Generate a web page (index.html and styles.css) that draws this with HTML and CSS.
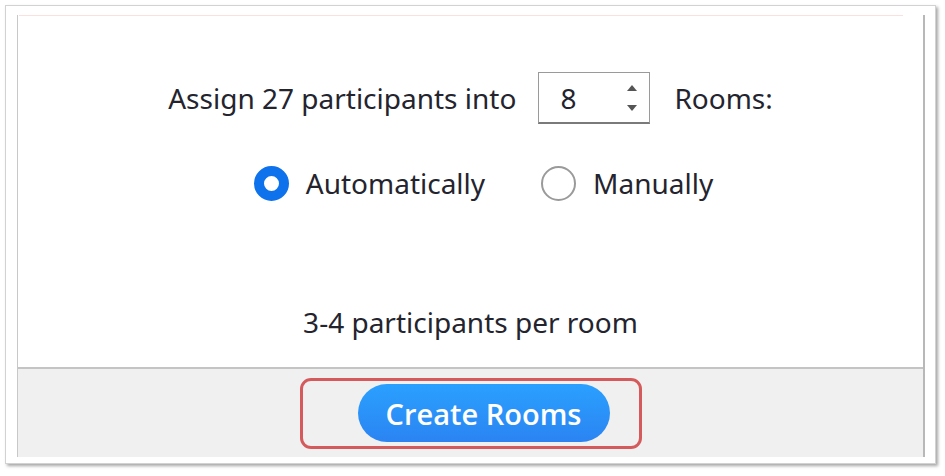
FILE: index.html
```html
<!DOCTYPE html>
<html lang="en">
<head>
<meta charset="utf-8">
<title>Breakout Rooms</title>
<link rel="stylesheet" href="styles.css">
</head>
<body>
<div class="frame">
  <div class="panel">
    <div class="accent"></div>
    <main class="content">
      <div class="assign-row">
        <span class="label">Assign 27 participants into</span>
        <div class="spinbox">
          <span class="spin-value">8</span>
          <span class="spin-arrows">
            <svg width="10" height="6" viewBox="0 0 10 6"><path d="M5 0 L10 6 L0 6 Z" fill="#555"/></svg>
            <svg width="10" height="6" viewBox="0 0 10 6"><path d="M0 0 L10 0 L5 6 Z" fill="#555"/></svg>
          </span>
        </div>
        <span class="label">Rooms:</span>
      </div>
      <div class="mode-row">
        <label class="option">
          <span class="radio radio-on"></span>
          <span class="label">Automatically</span>
        </label>
        <label class="option">
          <span class="radio"></span>
          <span class="label">Manually</span>
        </label>
      </div>
      <div class="per-room"><span class="label">3-4 participants per room</span></div>
    </main>
    <footer class="footer">
      <div class="highlight">
        <button class="create-btn">Create Rooms</button>
      </div>
    </footer>
  </div>
</div>
</body>
</html>
```

FILE: styles.css
```css
html, body {
  margin: 0;
  padding: 0;
  background: #ffffff;
}
body {
  width: 945px;
  height: 476px;
  overflow: hidden;
  font-family: "Noto Sans", "Open Sans", sans-serif;
  color: #24242e;
}
.frame {
  margin: 5px 0 0 5px;
  width: 931px;
  height: 459px;
  border: 1px solid #d2d2d2;
  box-shadow: 2px 2px 3px rgba(0, 0, 0, 0.35);
  background: #ffffff;
  padding: 9px 0 0 11px;
  box-sizing: border-box;
}
.panel {
  width: 908px;
  height: 442px;
  border-left: 1px solid #c8c8c8;
  border-right: 2px solid #b8b8b8;
  box-sizing: border-box;
  display: flex;
  flex-direction: column;
}
.accent {
  height: 1px;
  margin: 0 20px 0 1px;
  background: #fbe0e0;
}
.content {
  height: 351px;
  display: flex;
  flex-direction: column;
  align-items: center;
  padding-top: 56px;
  box-sizing: border-box;
}
.label {
  font-size: 28px;
  line-height: 36px;
  white-space: nowrap;
}
.assign-row {
  display: flex;
  align-items: center;
  height: 52px;
}
.spinbox {
  margin: 0 24px 0 22px;
  width: 112px;
  height: 52px;
  box-sizing: border-box;
  border: 1px solid #9a9a9a;
  border-bottom: 2px solid #7a7a7a;
  display: flex;
  align-items: center;
  justify-content: space-between;
  padding: 0 12px 0 21px;
}
.spin-value {
  font-size: 28px;
  line-height: 36px;
}
.spin-arrows {
  display: flex;
  flex-direction: column;
  gap: 14px;
}
.spin-arrows svg {
  display: block;
}
.mode-row {
  margin-top: 42px;
  display: flex;
  align-items: center;
  gap: 56px;
  padding-left: 26px;
  height: 34px;
}
.option {
  display: flex;
  align-items: center;
  gap: 17px;
}
.radio {
  width: 35px;
  height: 35px;
  border-radius: 50%;
  box-sizing: border-box;
  border: 2px solid #9a9a9a;
  background: #fff;
}
.radio-on {
  border: 10px solid #0e72ed;
}
.per-room {
  margin-top: 104px;
}
.footer {
  flex: 1;
  background: #f0f0f0;
  border-top: 2px solid #c4c4c4;
  display: flex;
  align-items: center;
  justify-content: center;
}
.highlight {
  width: 342px;
  height: 71px;
  box-sizing: border-box;
  border: 3px solid #d45a5c;
  border-radius: 11px;
  display: flex;
  align-items: center;
  padding-left: 55px;
}
.create-btn {
  width: 252px;
  height: 58px;
  border: none;
  border-radius: 29px;
  background: linear-gradient(#2aa0ff, #2b84f2);
  color: #ffffff;
  font-family: "Open Sans", sans-serif;
  font-weight: 600;
  font-size: 29px;
  letter-spacing: 0;
  padding: 0;
}
```
